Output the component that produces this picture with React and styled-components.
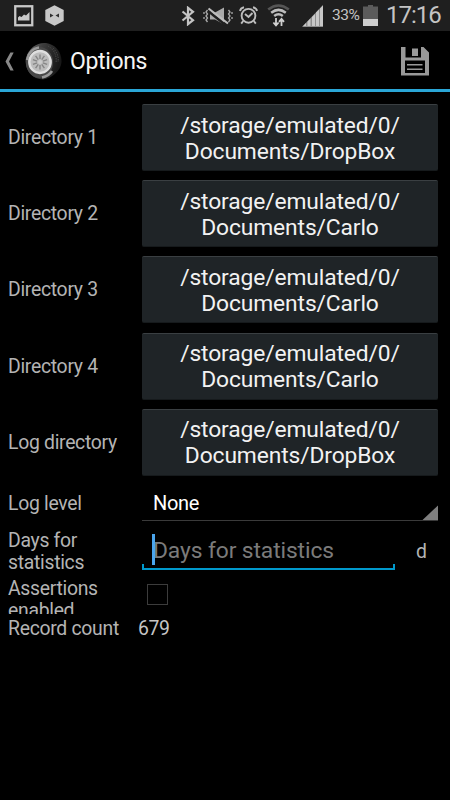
import React from 'react';
import styled, { createGlobalStyle } from 'styled-components';

const GlobalStyle = createGlobalStyle`
  * {
    box-sizing: border-box;
  }

  body {
    margin: 0;
    background: #000;
    overflow: hidden;
  }
`;

const Screen = styled.div`
  width: 450px;
  height: 800px;
  background: #000;
  color: #b4b4b4;
  font-family: Roboto, sans-serif;
  display: flex;
  flex-direction: column;
`;

const StatusBar = styled.header`
  height: 31px;
  flex: none;
  background: #1f1f1f;
  color: #c4c4c4;
  display: flex;
  align-items: center;
  padding: 0 9px 0 14px;

  svg {
    flex: none;
    display: block;
  }
`;

const Notifications = styled.div`
  display: flex;
  align-items: center;
  gap: 11px;
  margin-right: auto;
`;

const StatusIcons = styled.div`
  display: flex;
  align-items: center;

  svg:nth-of-type(2) {
    margin-left: 8px;
  }

  svg:nth-of-type(3) {
    margin-left: 6px;
  }

  svg:nth-of-type(4) {
    margin-left: 9px;
  }

  svg:nth-of-type(5) {
    margin-left: 12px;
  }
`;

const BatteryLevel = styled.span`
  font-size: 15.5px;
  line-height: 31px;
  width: 27px;
  margin: 0 4px 0 9px;
  letter-spacing: -0.4px;
  white-space: nowrap;
`;

const Clock = styled.span`
  font-size: 24px;
  line-height: 31px;
  width: 55px;
  height: 31px;
  margin-left: 8px;
  letter-spacing: -1px;
  white-space: nowrap;
`;

const ActionBar = styled.div`
  height: 61px;
  flex: none;
  border-bottom: 3px solid #2aa6d6;
  display: flex;
  align-items: center;
  padding: 2px 21px 0 5px;
`;

const Title = styled.h1`
  flex: 1;
  margin: 1px 0 0 7px;
  font-size: 23px;
  font-weight: 400;
  letter-spacing: -0.35px;
  color: #f5f5f5;
`;

const Form = styled.main`
  padding: 7.5px 12px 0 8px;
`;

const Row = styled.div`
  display: flex;
  align-items: ${({ $align }) => $align || 'center'};
  height: ${({ $height }) => $height}px;
  overflow: hidden;
`;

const Label = styled.label`
  width: ${({ $width }) => $width || 134}px;
  flex: none;
  padding-top: 1px;
  font-size: 19.4px;
  line-height: 22px;
  letter-spacing: -0.3px;
`;

const PathButton = styled.button`
  flex: 1;
  height: 67px;
  padding: 2px 0 0;
  border: 0;
  border-top: 1px solid #3a3f42;
  border-bottom: 1px solid #161a1c;
  border-radius: 2px;
  background: #1f2427;
  color: #f2f2f2;
  font-family: inherit;
  font-size: 22.8px;
  line-height: 26px;
  letter-spacing: -0.12px;
`;

const Spinner = styled.div`
  flex: 1;
  height: 36px;
  border-bottom: 1px solid #3a3a3a;
  display: flex;
  align-items: flex-end;
  justify-content: space-between;
  padding-left: 11px;
  color: #fff;
  font-size: 20px;
  line-height: 33px;
  letter-spacing: -0.35px;
`;

const SpinnerArrow = styled.i`
  width: 16px;
  height: 15px;
  background: #7f7f7f;
  clip-path: polygon(100% 0, 100% 100%, 0 100%);
`;

const NumberField = styled.div`
  position: relative;
  width: 253px;
  height: 40px;
  margin-bottom: 4px;
  border-bottom: 2px solid #0099cc;
  padding-left: 11px;
  color: #7b7b7b;
  font-size: 22.8px;
  line-height: 41px;
  letter-spacing: -0.1px;
  white-space: nowrap;

  &::before,
  &::after {
    content: '';
    position: absolute;
    bottom: 0;
    width: 2px;
    height: 4px;
    background: #0099cc;
  }

  &::before {
    left: 0;
  }

  &::after {
    right: 0;
  }
`;

const Caret = styled.span`
  position: absolute;
  left: 10px;
  top: 4px;
  width: 3px;
  height: 31px;
  background: #4ba5ec;
`;

const Unit = styled.span`
  margin: 0 0 1px 21px;
  font-size: 19.4px;
`;

const Checkbox = styled.span`
  width: 21px;
  height: 21px;
  margin: 7px 0 0 5px;
  border: 1px solid #3c3c3c;
`;

const Value = styled.span`
  padding-top: 1px;
  font-size: 19.4px;
  letter-spacing: -0.4px;
  color: #c4c4c4;
`;

const PictureIcon = () => (
  <svg width="20" height="22" viewBox="0 0 20 22">
    <rect x="1.25" y="1.25" width="17" height="19" fill="none" stroke="#c8c8c8" strokeWidth="2.3" />
    <path d="M4 15.500V12.500l1.500-1.500 2 1 2.500-2.500 2 1L15.500 7V15.500z" fill="#c8c8c8" />
  </svg>
);

const HexIcon = () => (
  <svg width="19" height="21" viewBox="0 0 19 21">
    <path d="M9.5 0.3L18.7 5v11L9.5 20.8 0.3 16V5z" fill="#c8c8c8" />
    <path d="M5 8.500l3.500 2-3.500 2zM14 8.500l-3.500 2 3.500 2z" fill="#303030" />
  </svg>
);

const BluetoothIcon = () => (
  <svg width="14" height="20" viewBox="0 0 14 20" fill="none" stroke="#c4c4c4" strokeWidth="2.2">
    <path d="M1.500 5.500l10.500 8.700L7 18.200V1.800l5 4L1.500 14.500" />
  </svg>
);

const MuteIcon = () => (
  <svg width="30" height="20" viewBox="0 0 30 20">
    <path d="M7 6.500h5L21 1.500v17l-9-5H7z" fill="#aaa" />
    <path d="M4.500 4.500L23 19.500" stroke="#1f1f1f" strokeWidth="2.500" />
    <path d="M5.500 2.500L25 17.500" stroke="#bdbdbd" strokeWidth="2.200" />
    <path
      d="M4.500 4L3 6l1.500 2L3 10l1.500 2L3 14l1.500 2M1 6v2M1 11v2M25.500 4L27 6l-1.500 2 1.500 2-1.500 2 1.500 2-1.500 2M29 6v2M29 11v2"
      fill="none"
      stroke="#aaa"
      strokeWidth="1.3"
    />
  </svg>
);

const AlarmIcon = () => (
  <svg width="19" height="19" viewBox="0 0 19 19" fill="none" stroke="#bdbdbd" strokeWidth="1.9">
    <circle cx="9.5" cy="9.8" r="6.9" />
    <path d="M6 8l3.5 3L13.5 7" />
    <path d="M1 5Q1.5 2 5 1.2M18 5Q17.5 2 14 1.2M4.2 15l-2 2.6M14.8 15l2 2.6" />
  </svg>
);

const WifiIcon = () => (
  <svg width="23" height="24" viewBox="0 0 23 24" fill="none">
    <path d="M1.2 5.5Q11.5-2.5 21.8 5.5" stroke="#555" strokeWidth="2.6" />
    <path d="M4.2 8.7Q11.5 3 18.8 8.7" stroke="#bdbdbd" strokeWidth="2.5" />
    <path d="M7.2 11.9Q11.5 8.5 15.8 11.9" stroke="#bdbdbd" strokeWidth="2.5" />
    <path d="M9 14v7M6.4 18.5L9 21.5l2.6-3M14.5 22v-7M12 17.8l2.5-3 2.5 3" stroke="#d0d0d0" strokeWidth="1.8" />
  </svg>
);

const SignalIcon = () => (
  <svg width="21" height="22" viewBox="0 0 21 22">
    <path d="M0 22L21 0v22z" fill="#8e8e8e" />
    <path d="M1 21L4 18v3zM5.500 16.500l3-3V21h-3zM10 12l3-3v12h-3zM14 7.500l3-3v16.500h-3zM18 3.500l3-3v20.500h-3z" fill="#c8c8c8" />
  </svg>
);

const BatteryIcon = () => (
  <svg width="15" height="21" viewBox="0 0 15 21">
    <path d="M5 0h5v1.5h5V21H0V1.5h5z" fill="#5b5b5b" />
    <path d="M0 14h15v7H0z" fill="#cecece" />
  </svg>
);

const BackIcon = () => (
  <svg width="9" height="19" viewBox="0 0 9 19">
    <path d="M5.4 0.5H8.7L4 9.5l4.7 9H5.4L0.5 9.5z" fill="#888" />
  </svg>
);

const SPOKES = [0, 36, 72, 108, 144, 180, 216, 252, 288, 324];

const Wheel = styled.svg`
  flex: none;
  margin-left: 11px;
`;

const WheelIcon = () => (
  <Wheel width="38" height="38" viewBox="0 0 38 38">
    <defs>
      <linearGradient id="tyre" x1="0" y1="0" x2="1" y2="0.3">
        <stop offset="0" stopColor="#777" />
        <stop offset="0.45" stopColor="#3c3c3c" />
        <stop offset="1" stopColor="#181818" />
      </linearGradient>
    </defs>
    <path d="M1 16C4 5 13 0 21 1c9 1 16 9 15.500 19C36 29 27 36 18 37.500 7 37-1 27 1 16z" fill="url(#tyre)" />
    <path d="M23 4c7 4 9 11 8 17M28 6c4 4 6 9 5 14" stroke="#454545" fill="none" strokeDasharray="1.500 1" />
    <ellipse cx="14.500" cy="20.500" rx="13.500" ry="15.500" fill="#484848" />
    <path d="M2 18Q4 7 14 5.500M27 29Q24 34 17 35.500" stroke="#999" strokeWidth="2.500" fill="none" />
    <ellipse cx="15" cy="20" rx="10.700" ry="11" fill="#bcbcbc" stroke="#dedede" strokeWidth="2.400" />
    {SPOKES.map((angle) => (
      <path key={angle} d="M15 17V12.500" stroke="#858585" strokeWidth="1.400" transform={`rotate(${angle} 15 20)`} />
    ))}
    <circle cx="15" cy="20" r="2" fill="#ccc" />
  </Wheel>
);

const SaveIcon = () => (
  <svg width="28" height="29" viewBox="0 0 28 29">
    <path
      d="M0 0H4.500V10.500H20V0H22.500L28 5.500V28.500H0zM4 13.500V26H24V13.500z"
      fill="#999"
      fillRule="evenodd"
    />
    <path d="M11 1.500h6v7.500h-6zM6 17h15.500v1.500H6zM6 21.500h15.500V23H6z" fill="#999" />
  </svg>
);

const DIRECTORIES = [
  { label: 'Directory 1', folder: 'DropBox' },
  { label: 'Directory 2', folder: 'Carlo' },
  { label: 'Directory 3', folder: 'Carlo' },
  { label: 'Directory 4', folder: 'Carlo' },
  { label: 'Log directory', folder: 'DropBox' },
];

const App = () => (
  <>
    <GlobalStyle />
    <Screen>
      <StatusBar>
        <Notifications>
          <PictureIcon />
          <HexIcon />
        </Notifications>
        <StatusIcons>
          <BluetoothIcon />
          <MuteIcon />
          <AlarmIcon />
          <WifiIcon />
          <SignalIcon />
          <BatteryLevel>33%</BatteryLevel>
          <BatteryIcon />
          <Clock>17:16</Clock>
        </StatusIcons>
      </StatusBar>
      <ActionBar>
        <BackIcon />
        <WheelIcon />
        <Title>Options</Title>
        <SaveIcon />
      </ActionBar>
      <Form>
        {DIRECTORIES.map(({ label, folder }) => (
          <Row key={label} $height={76.2}>
            <Label>{label}</Label>
            <PathButton>
              /storage/emulated/0/
              <br />
              Documents/{folder}
            </PathButton>
          </Row>
        ))}
        <Row $height={46}>
          <Label>Log level</Label>
          <Spinner>
            None
            <SpinnerArrow />
          </Spinner>
        </Row>
        <Row $height={51}>
          <Label>
            Days for
            <br />
            statistics
          </Label>
          <NumberField>
            <Caret />
            Days for statistics
          </NumberField>
          <Unit>d</Unit>
        </Row>
        <Row $height={37} $align="flex-start">
          <Label>
            Assertions
            <br />
            enabled
          </Label>
          <Checkbox />
        </Row>
        <Row $height={28}>
          <Label $width={130}>Record count</Label>
          <Value>679</Value>
        </Row>
      </Form>
    </Screen>
  </>
);

export default App;
